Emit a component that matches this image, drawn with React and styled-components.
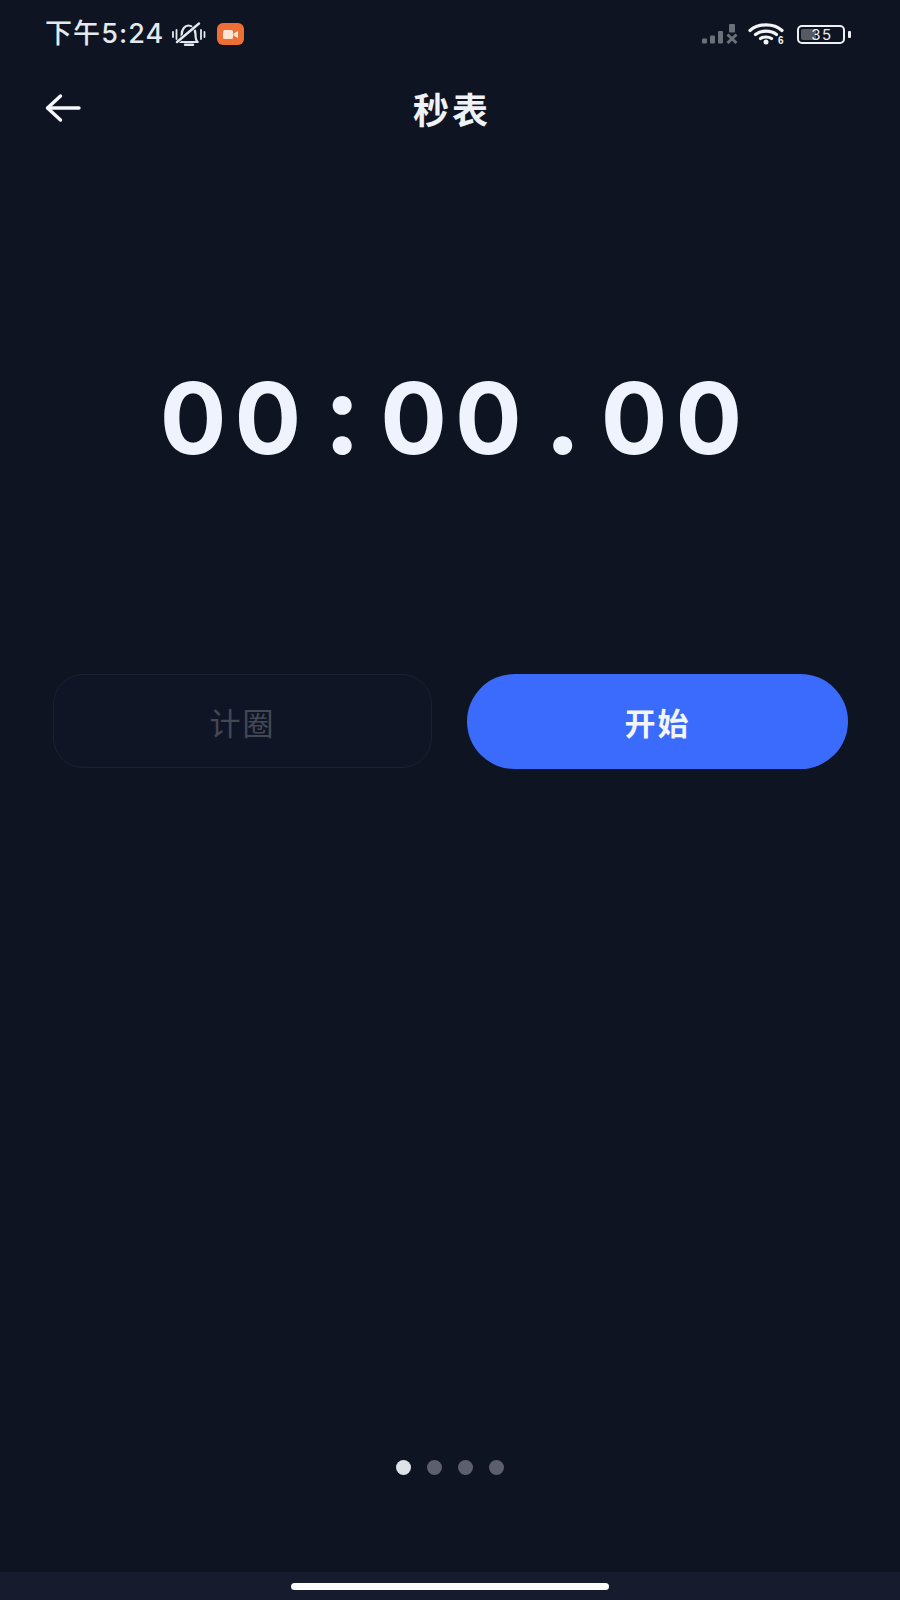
import React from "react";
import styled, { createGlobalStyle } from "styled-components";

const Global = createGlobalStyle`
  html, body { margin: 0; padding: 0; background: #0e1421; }
  * { box-sizing: border-box; }
`;

const CJK = `"Noto Sans CJK SC", "Noto Sans", sans-serif`;

const Screen = styled.div`
  width: 900px;
  height: 1600px;
  display: flex;
  flex-direction: column;
  background: #0e1421;
  font-family: ${CJK};
  overflow: hidden;
`;

const StatusBar = styled.div`
  height: 68px;
  padding: 0 49px 0 45px;
  display: flex;
  align-items: center;
  justify-content: space-between;
`;

const StatusGroup = styled.div`
  display: flex;
  align-items: center;
`;

const Clock = styled.span`
  color: #e4e8ef;
  font-family: Inter, ${CJK};
  font-size: 27px;
  line-height: 32px;
  letter-spacing: 1.1px;
  font-weight: 500;
`;

const RecBadge = styled.div`
  width: 27px;
  height: 22px;
  margin-left: 11px;
  border-radius: 6px;
  background: #ee6f35;
  display: flex;
  align-items: center;
  justify-content: center;
`;

const Header = styled.header`
  height: 80px;
  padding: 0 45px;
  display: grid;
  grid-template-columns: 60px 1fr 60px;
  align-items: center;
`;

const BackButton = styled.button`
  border: 0;
  padding: 0;
  background: none;
  display: flex;
  width: 36px;
  height: 30px;
`;

const Title = styled.h1`
  margin: 0;
  padding-left: 4px;
  text-align: center;
  color: #eef1f6;
  font-size: 36px;
  font-weight: 700;
  letter-spacing: 3px;
  line-height: 44px;
`;

const Timer = styled.div`
  margin-top: 210px;
  padding-left: 10px;
  height: 110px;
  display: flex;
  align-items: baseline;
  justify-content: center;
  color: #eef3fd;
  font-family: Inter, sans-serif;
  font-weight: 700;
  font-size: 99px;
  line-height: 110px;
`;

const Digits = styled.span`
  letter-spacing: 8px;
`;

const Sep = styled.span`
  width: 71px;
  padding-right: 5px;
  text-align: center;
  font-size: 112px;
  line-height: 110px;
`;

const Actions = styled.div`
  margin-top: 206px;
  padding-left: 53px;
  display: grid;
  grid-template-columns: 379px 381px;
  align-items: start;
  gap: 35px;
`;

const LapButton = styled.button`
  height: 94px;
  border-radius: 30px;
  border: 1px solid #1c2132;
  background: #101526;
  color: #444854;
  font-family: ${CJK};
  font-size: 31px;
  letter-spacing: 2px;
  font-weight: 400;
`;

const StartButton = styled.button`
  height: 95px;
  border-radius: 48px;
  border: 0;
  background: #3a6bfd;
  color: #f2f5fb;
  font-family: ${CJK};
  font-size: 31px;
  letter-spacing: 2px;
  font-weight: 700;
`;

const Dots = styled.div`
  margin-top: 691px;
  display: flex;
  justify-content: center;
  gap: 16px;
`;

const Dot = styled.span`
  width: 15px;
  height: 15px;
  border-radius: 50%;
  background: ${(p) => (p.$active ? "#dfe3e8" : "#5d606c")};
`;

const NavBar = styled.div`
  margin-top: auto;
  height: 28px;
  background: #161b2e;
  display: flex;
  justify-content: center;
  padding-top: 11px;
`;

const HomeHandle = styled.div`
  width: 318px;
  height: 7px;
  border-radius: 4px;
  background: #ffffff;
`;

const BatteryBody = styled.div`
  position: relative;
  width: 48px;
  height: 19px;
  margin-left: 12px;
  border: 2px solid #eef0f4;
  border-radius: 5px;
  display: flex;
  align-items: center;
  justify-content: center;
  color: #e8ebf0;
  font-family: Inter, sans-serif;
  font-size: 15px;
  letter-spacing: 1.5px;
`;

const BatteryFill = styled.div`
  position: absolute;
  left: 2px;
  top: 2px;
  bottom: 2px;
  border-radius: 2px;
  background: #565a63;
`;

const BatteryLevel = styled.span`
  position: relative;
  margin-right: -2px;
`;

const BatteryCap = styled.div`
  width: 3px;
  height: 7px;
  margin-left: 3px;
  border-radius: 1px;
  background: #eef0f4;
`;

const BellSvg = styled.svg`
  margin-left: 8px;
`;

const SignalSvg = styled.svg`
  margin-right: 10px;
`;

const BellOff = () => (
  <BellSvg width="34" height="24" viewBox="0 0 34 24" fill="none" stroke="#e4e8ef" strokeWidth="2.200" strokeLinecap="round" strokeLinejoin="round">
    <path d="M7.500 20c1.800-1.500 2.200-3 2.200-7.500C9.700 7 13 3.500 16.500 3.500S23.500 7 23.500 12.500c0 4.500.5 6 2.200 7.500z" />
    <path d="M13 22.800h8" strokeWidth="2.400" />
    <path d="M5 20 27 1.500" stroke="#0e1421" strokeWidth="4" />
    <path d="M5 20 27 1.500" strokeWidth="2.400" />
    <path d="M1 10v5M4.500 8v9M29 8v9M32.500 10v5" strokeWidth="1.800" />
  </BellSvg>
);

const VideoGlyph = () => (
  <svg width="15" height="9" viewBox="0 0 15 9">
    <rect x="0" y="0" width="10" height="9" rx="1.500" fill="#fde4d5" />
    <path d="M10.500 3.500 15 1v7l-4.500-2.500z" fill="#fde4d5" />
  </svg>
);

const Signal = () => (
  <SignalSvg width="36" height="20" viewBox="0 0 36 20" fill="#6c7079">
    <rect x="0" y="14.500" width="5" height="5" rx="1" />
    <rect x="8" y="11.500" width="5" height="8" rx="1" />
    <rect x="16" y="7" width="5" height="12.500" rx="1" />
    <rect x="27" y="0" width="6" height="8.500" rx="1" />
    <path d="m25.500 10.500 9 8.500M34.500 10.500l-9 8.500" stroke="#6c7079" strokeWidth="3" fill="none" />
  </SignalSvg>
);

const Wifi = () => (
  <svg width="37" height="22" viewBox="0 0 37 22" fill="none" stroke="#f2f4f8" strokeWidth="3.200" strokeLinecap="round">
    <path d="M2 7.500c8.500-7.500 24-7.500 32 0" />
    <path d="M7.500 11.500c5.500-4.500 15.500-4.500 21 0" />
    <path d="M12.500 15.500c3-2 8-2 11 0" />
    <circle cx="18" cy="19" r="2.500" fill="#f2f4f8" stroke="none" />
    <text x="30" y="21" fill="#f2f4f8" stroke="none" fontFamily="Liberation Sans" fontWeight="700" fontSize="10">6</text>
  </svg>
);

export default function App() {
  const level = 35;
  return (
    <Screen>
      <Global />
      <StatusBar>
        <StatusGroup>
          <Clock>下午5:24</Clock>
          <BellOff />
          <RecBadge><VideoGlyph /></RecBadge>
        </StatusGroup>
        <StatusGroup>
          <Signal />
          <Wifi />
          <BatteryBody>
            <BatteryFill style={{ width: `${level}%` }} />
            <BatteryLevel>{level}</BatteryLevel>
          </BatteryBody>
          <BatteryCap />
        </StatusGroup>
      </StatusBar>
      <Header>
        <BackButton aria-label="返回">
          <svg width="36" height="30" viewBox="0 0 36 30" fill="none" stroke="#f6f7fa" strokeWidth="3.400" strokeLinecap="round" strokeLinejoin="round">
            <path d="M34 15H3" />
            <path d="M15.500 3 2.500 15l13 12" />
          </svg>
        </BackButton>
        <Title>秒表</Title>
      </Header>
      <Timer>
        <Digits>00</Digits>
        <Sep>:</Sep>
        <Digits>00</Digits>
        <Sep>.</Sep>
        <Digits>00</Digits>
      </Timer>
      <Actions>
        <LapButton disabled>计圈</LapButton>
        <StartButton>开始</StartButton>
      </Actions>
      <Dots>
        <Dot $active />
        <Dot />
        <Dot />
        <Dot />
      </Dots>
      <NavBar><HomeHandle /></NavBar>
    </Screen>
  );
}
